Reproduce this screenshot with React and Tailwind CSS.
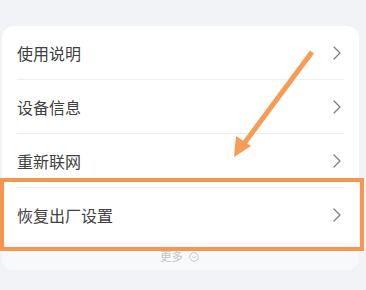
import React from "react";

const rows = ["使用说明", "设备信息", "重新联网", "恢复出厂设置"];

function Chevron() {
  return (
    <svg width="8" height="14" viewBox="0 0 8 14" fill="none" className="shrink-0">
      <path d="M1 1l6 6-6 6" stroke="#7a7a7a" strokeWidth="1.2" strokeLinecap="round" strokeLinejoin="round" />
    </svg>
  );
}

export default function App() {
  return (
    <div
      className="relative w-[366px] h-[290px] overflow-hidden bg-[#f2f3f7] pt-[26px] pl-[2px]"
      style={{ fontFamily: '"Noto Sans CJK SC", "Noto Sans", sans-serif' }}
    >
      <div className="w-[357px] rounded-[12px] bg-white overflow-hidden">
        {rows.map((t, i) => (
          <div key={t} className="px-[15px]">
            <div
              className={
                "h-[54px] flex items-center justify-between pr-[3px] " +
                (i < rows.length - 1 ? "border-b border-[#efefef]" : "")
              }
            >
              <span className="text-[16px] text-[#404040] leading-none">{t}</span>
              <Chevron />
            </div>
          </div>
        ))}
        <div className="h-[28px] bg-[#f8f9fb] flex items-start justify-center pt-[9px] pr-[2px] gap-[6px]">
          <span className="text-[11.5px] text-[#c4c4c4] leading-none">更多</span>
          <svg width="10" height="10" viewBox="0 0 10 10" fill="none" className="mt-[1px]">
            <circle cx="5" cy="5" r="4.3" stroke="#c4c4c4" strokeWidth="0.9" />
            <path d="M3.3 4.3L5 6l1.7-1.7" stroke="#c4c4c4" strokeWidth="0.9" />
          </svg>
        </div>
      </div>

      {/* annotation box */}
      <div className="absolute left-0 top-[178px] w-[364px] h-[73px] border-[4px] border-[#f7964f] pointer-events-none" />

      {/* annotation arrow */}
      <svg className="absolute left-0 top-0 pointer-events-none" width="366" height="290" viewBox="0 0 366 290">
        <line x1="312" y1="52" x2="243" y2="145" stroke="#f79b55" strokeWidth="5" strokeLinecap="butt" />
        <polygon points="234,157 236,136 251,146" fill="#f79b55" />
      </svg>
    </div>
  );
}
